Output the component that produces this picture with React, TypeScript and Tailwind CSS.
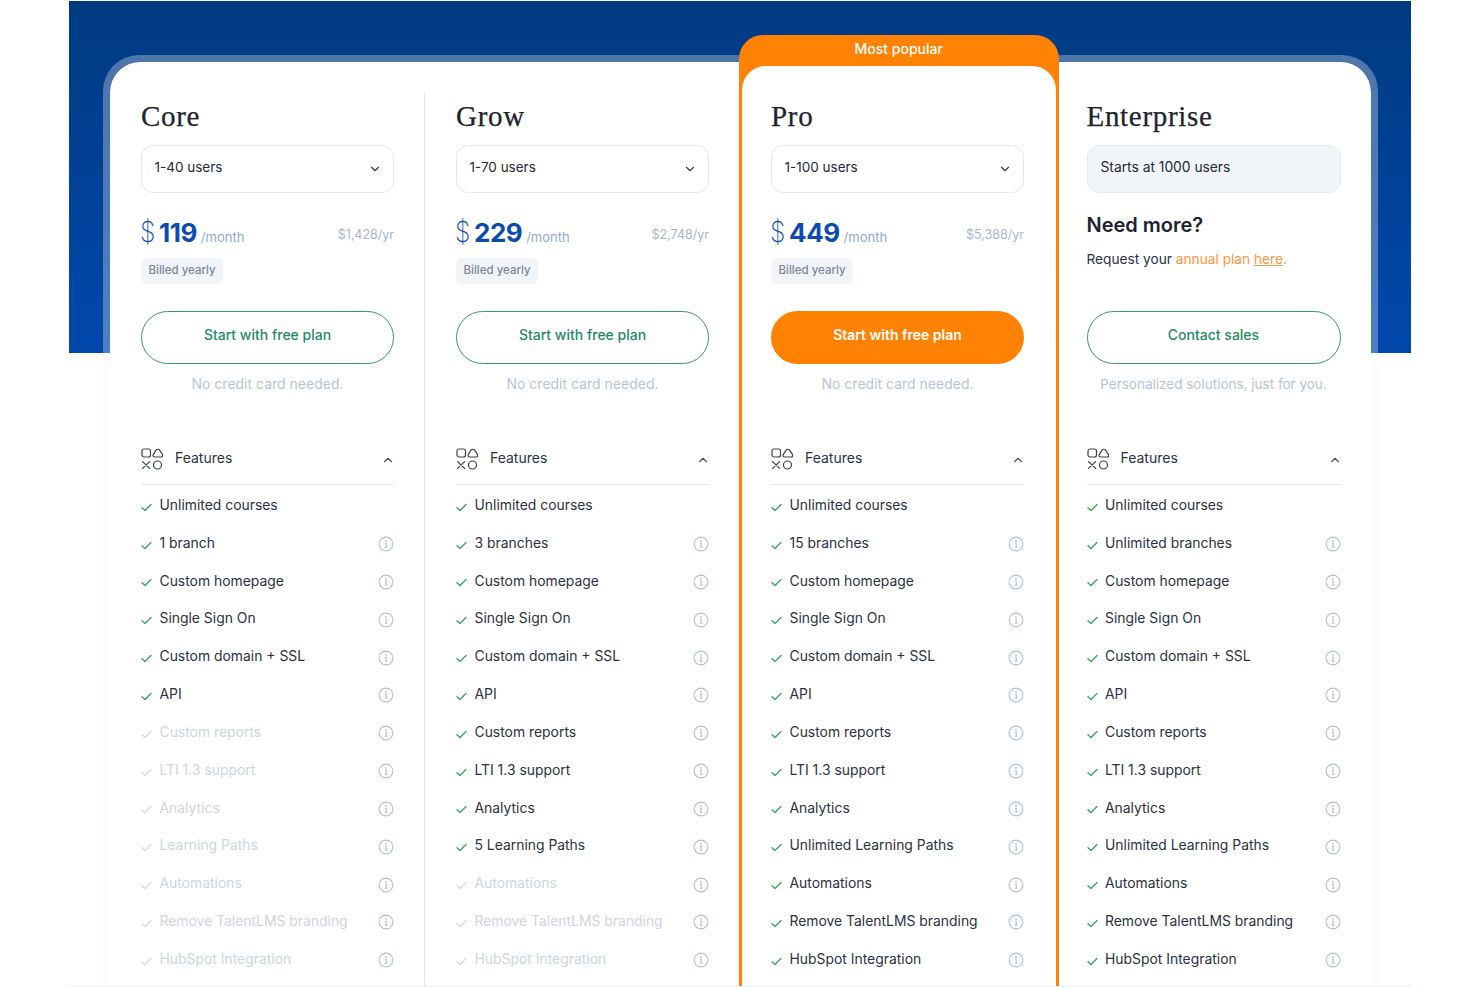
import { ChevronDown, ChevronUp } from "lucide-react";

type Plan = {
  name: string;
  users: string;
  price?: string;
  yearly?: string;
  branches: string;
  paths: string;
  // how many features from the end of the list are greyed out
  off: number;
};

const plans: Plan[] = [
  { name: "Core", users: "1-40 users", price: "119", yearly: "$1,428/yr", branches: "1 branch", paths: "Learning Paths", off: 7 },
  { name: "Grow", users: "1-70 users", price: "229", yearly: "$2,748/yr", branches: "3 branches", paths: "5 Learning Paths", off: 3 },
  { name: "Pro", users: "1-100 users", price: "449", yearly: "$5,388/yr", branches: "15 branches", paths: "Unlimited Learning Paths", off: 0 },
  { name: "Enterprise", users: "Starts at 1000 users", branches: "Unlimited branches", paths: "Unlimited Learning Paths", off: 0 },
];

function CheckMark({ off }: { off: boolean }) {
  return (
    <svg width="11" height="9" viewBox="0 0 11 9" fill="none" className={off ? "mt-[2px] shrink-0 text-[#d5dbe6]" : "mt-[2px] shrink-0 text-[#3ba55d]"}>
      <path d="M1 4.8 L4 7.6 L10 1.6" stroke="currentColor" strokeWidth="1.4" strokeLinecap="round" strokeLinejoin="round" />
    </svg>
  );
}

function InfoIcon() {
  return (
    <svg width="16" height="16" viewBox="0 0 16 16" fill="none" className="shrink-0 text-[#b4bed2]">
      <circle cx="8" cy="8" r="6.9" stroke="currentColor" strokeWidth="1.1" />
      <circle cx="8" cy="4.9" r="0.9" fill="currentColor" />
      <path d="M6.9 7.2 H8.2 V11.2 M6.7 11.3 H9.5" stroke="currentColor" strokeWidth="1.1" />
    </svg>
  );
}

function ShapesIcon() {
  return (
    <svg width="22" height="22" viewBox="0 0 22 22" fill="none" className="shrink-0 text-[#3a4252]">
      <rect x="1" y="1" width="8.5" height="8" rx="2" stroke="currentColor" strokeWidth="1.2" />
      <path d="M14 2.2 C15 0.9 16.6 0.9 17.6 2.2 L20.4 6.4 C21.2 7.7 20.5 9 19 9 H12.8 C11.2 9 10.6 7.7 11.4 6.4 Z" stroke="currentColor" strokeWidth="1.2" transform="translate(1 0)" />
      <path d="M1.6 13.6 L8.6 20.4 M8.6 13.6 L1.6 20.4" stroke="currentColor" strokeWidth="1.3" strokeLinecap="round" />
      <circle cx="16.5" cy="17" r="4" stroke="currentColor" strokeWidth="1.2" />
    </svg>
  );
}

function PlanBody({ plan }: { plan: Plan }) {
  const isPro = plan.name === "Pro";
  const isEnterprise = plan.name === "Enterprise";
  const features = [
    "Unlimited courses",
    plan.branches,
    "Custom homepage",
    "Single Sign On",
    "Custom domain + SSL",
    "API",
    "Custom reports",
    "LTI 1.3 support",
    "Analytics",
    plan.paths,
    "Automations",
    "Remove TalentLMS branding",
    "HubSpot Integration",
  ];

  return (
    <div className="flex flex-col">
      <h2 className="h-[46px] text-[29px] leading-[46px] tracking-[0.7px] text-[#1d2330] [-webkit-text-stroke:0.25px_#1d2330] font-['Liberation_Serif',serif]">{plan.name}</h2>

      {isEnterprise ? (
        <div className="mt-[6px] flex h-[48px] items-center rounded-xl border border-[#e6eaf2] bg-[#f1f4f9] px-[13px] pb-[4px] text-[13.8px] text-[#232a38]">
          {plan.users}
        </div>
      ) : (
        <div className="mt-[6px] flex h-[48px] items-center justify-between rounded-xl border border-[#e2e7f1] bg-white pl-[12.5px] pr-[11px] pb-[4px] text-[13.5px] text-[#232a38]">
          {plan.users}
          <ChevronDown size={14} strokeWidth={2} className="mt-[4px] text-[#333b4a]" />
        </div>
      )}

      {isEnterprise ? (
        <div className="h-[118px]">
          <div className="mt-[19px] text-xl leading-[26px] font-semibold text-[#1d2330]">Need more?</div>
          <p className="mt-[11px] text-[13.7px] leading-5 text-[#2a3242]">
            Request your <span className="text-[#ff9440]">annual plan <span className="underline">here</span>.</span>
          </p>
        </div>
      ) : (
        <div className="h-[118px]">
          <div className="mt-[23px] flex h-[34px] items-end justify-between">
            <div className="flex items-baseline text-[#0b4bb0]">
              <span className="-ml-px origin-left scale-x-[0.85] text-[29px] leading-[34px] font-extralight">$</span>
              <span className="ml-[1px] text-[26px] leading-[34px] font-bold tracking-[-0.5px]">{plan.price}</span>
              <span className="ml-[4px] text-[13px] text-[#8fa9d8]">/month</span>
            </div>
            <span className="mb-[5px] text-[12.5px] text-[#a9b5cc]">{plan.yearly}</span>
          </div>
          <span className="mt-[8px] inline-flex h-[26px] items-center rounded-md bg-[#f1f4f9] px-[7.5px] text-[11.5px] font-medium text-[#7c879d]">Billed yearly</span>
        </div>
      )}

      {isPro ? (
        <button className="h-[53px] rounded-full bg-[#ff8205] pb-[5px] text-sm font-semibold text-white">Start with free plan</button>
      ) : (
        <button className="h-[53px] rounded-full border-[1.5px] border-[#3a9379] bg-white pb-[5px] text-sm font-medium text-[#1f8a68]">
          {isEnterprise ? "Contact sales" : "Start with free plan"}
        </button>
      )}
      <p className={isEnterprise ? "mt-[10px] h-5 text-center text-[13.5px] leading-5 text-[#bac3d5]" : "mt-[10px] h-5 text-center text-sm leading-5 text-[#bac3d5]"}>
        {isEnterprise ? "Personalized solutions, just for you." : "No credit card needed."}
      </p>

      <div className="mt-[54px] flex items-center border-b border-[#e2e7f1] pb-[14px]">
        <ShapesIcon />
        <span className="ml-[12px] flex-1 pb-[2px] text-sm text-[#2a3242]">Features</span>
        <ChevronUp size={14} strokeWidth={2} className="mr-[-1px] mt-[2px] text-[#4a5262]" />
      </div>

      <ul className="pt-[2.4px]">
        {features.map((label, i) => {
          const off = i >= features.length - plan.off;
          return (
            <li key={label} className="flex h-[37.83px] items-center">
              <CheckMark off={off} />
              <span className={off ? "ml-[7.5px] flex-1 pb-[2px] text-[13.9px] text-[#ced5e2]" : "ml-[7.5px] flex-1 pb-[2px] text-[13.9px] text-[#2a3242]"}>{label}</span>
              {i > 0 && <InfoIcon />}
            </li>
          );
        })}
      </ul>
    </div>
  );
}

export default function App() {
  return (
    <div className="h-[987px] overflow-hidden bg-white pt-px pl-[69px] font-['Inter',sans-serif]">
      <div className="relative h-[986px] w-[1342px] overflow-hidden border-b border-[#e3f5f5]">
        <div className="absolute inset-x-0 top-0 h-[352px] bg-gradient-to-b from-[#013a80] to-[#0148ae]" />

        <div className="relative ml-[34px] mr-[33px] mt-[54px] rounded-t-[36px] border-[7px] border-b-0 border-white/30 bg-[#0a3a80]/[0.02]">
          <div className="grid h-[924px] grid-cols-[315px_314px_320px_312px] rounded-t-[30px] bg-white">
            <div className="pt-[31px]">
              <div className="h-full border-r border-[#e2e7f1] pl-[31px] pr-[30px]">
                <PlanBody plan={plans[0]} />
              </div>
            </div>
            <div className="pt-[31px] pl-[31px] pr-[30px]">
              <PlanBody plan={plans[1]} />
            </div>
            <div className="relative z-10 -mt-[27px] flex flex-col rounded-t-[24px] bg-[#ff8205] pl-[3px] pr-[3.5px]">
              <div className="flex h-[31px] items-center justify-center pb-[3px] text-sm font-medium text-white">Most popular</div>
              <div className="flex-1 rounded-t-[24px] bg-white pt-[27px] pl-[29px] pr-[31.5px]">
                <PlanBody plan={plans[2]} />
              </div>
            </div>
            <div className="pt-[31px] pl-[27.5px] pr-[30.5px]">
              <PlanBody plan={plans[3]} />
            </div>
          </div>
        </div>
      </div>
    </div>
  );
}
